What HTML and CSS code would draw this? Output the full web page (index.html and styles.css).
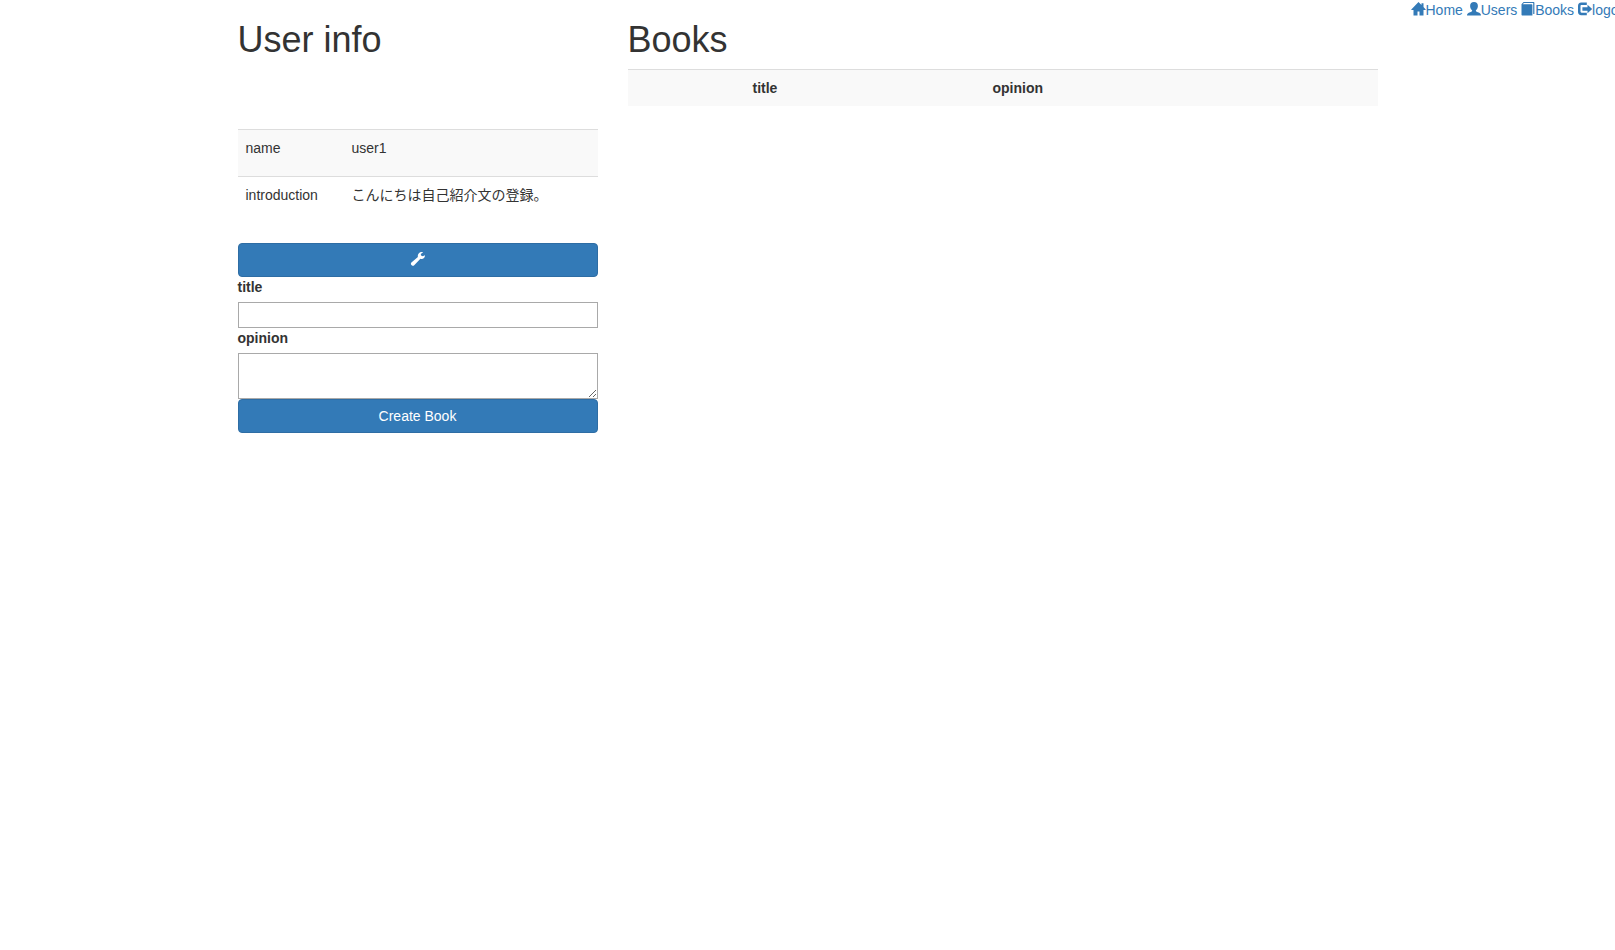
FILE: index.html
```html
<!DOCTYPE html>
<html lang="ja">
<head>
<meta charset="utf-8">
<meta name="viewport" content="width=device-width, initial-scale=1">
<title>User info</title>
<link rel="stylesheet" href="styles.css">
</head>
<body>
<div class="page">
  <main class="container">
    <section class="user">
      <h1>User info</h1>
      <table class="table user-table">
        <tbody>
          <tr><td class="user-key">name</td><td>user1</td></tr>
          <tr><td class="user-key">introduction</td><td>こんにちは自己紹介文の登録。</td></tr>
        </tbody>
      </table>
      <a class="btn" href="#edit" aria-label="Edit user">
        <svg class="icon" viewBox="0 0 14 14" aria-hidden="true"><path d="M13.900 3.200c.3 2-1.300 3.700-3.200 3.700-.5 0-.9-.1-1.300-.2L3.200 13.300c-.6.6-1.500.7-2.200.2L.2 12.700c-.5-.7-.4-1.500.2-2.100L6.900 4.900C6.300 2.400 8.200.1 10.600 0c.5 0 1 0 1.500.2L9.800 1.900l.2 1.700 1.800.7z"/></svg>
      </a>
      <form class="book-form">
        <label for="book-title">title</label>
        <input id="book-title" class="field" type="text">
        <label for="book-opinion">opinion</label>
        <textarea id="book-opinion" class="field" rows="2"></textarea>
        <button class="btn" type="button">Create Book</button>
      </form>
    </section>
    <section class="books">
      <h1>Books</h1>
      <table class="table books-table">
        <colgroup><col class="col-image"><col class="col-title"><col></colgroup>
        <thead>
          <tr><th></th><th>title</th><th>opinion</th></tr>
        </thead>
      </table>
    </section>
  </main>
  <nav class="nav">
    <a href="#home"><svg class="icon" viewBox="0 0 14 14" aria-hidden="true"><path d="M6.500 0 9.500 3V1.200h2v3.900L13.700 7.500c.2.300 0 .6-.3.600H11.500V13.500H7.500V9.500h-2v4H1.500V8.100H-.4c-.3 0-.5-.3-.3-.6z"/></svg>Home</a>
    <a href="#users"><svg class="icon" viewBox="0 0 14 14" aria-hidden="true"><path d="M7 .1c2.500 0 3.900 1.500 3.900 3.800 0 1.900-.8 3.500-2 4.300v.9c.2.500 1 .8 2 1.200 2 .8 3.100 1.400 3.100 3.200H0c0-1.800 1.100-2.400 3.100-3.200 1-.4 1.800-.7 2-1.200V8.200c-1.200-.8-2-2.400-2-4.300C3.100 1.600 4.500.1 7 .1z"/></svg>Users</a>
    <a href="#books"><svg class="icon" viewBox="0 0 14 14" aria-hidden="true"><path fill-rule="evenodd" d="M2.500 0h9.800c.7 0 1.100.4 1.100 1v11h-1.200V1.100H3L1.600 2.200h9c.5 0 .8.300.8.800v10.500H1.500c-.6 0-1-.4-1-1V2.200z"/></svg>Books</a>
    <a href="#logout"><svg class="icon" viewBox="0 0 14 14" aria-hidden="true"><path d="M8.800.6H3.200C1.200.6 0 1.900 0 3.900V10c0 2 1.200 3.200 3.200 3.200h5.600v-2.500H3.600c-.8 0-1.100-.4-1.100-1.100V4.200c0-.7.3-1.100 1.100-1.100h5.200zM9.500 2.800 14.200 7 9.500 11.200V8.700H4.400V5.300h5.100z"/></svg>logout</a>
  </nav>
</div>
</body>
</html>
```

FILE: styles.css
```css
* {
  box-sizing: border-box;
}

body {
  margin: 0;
  background: #fff;
  color: #333;
  font-family: "Liberation Sans", "Noto Sans CJK JP", sans-serif;
  font-size: 14px;
  line-height: 20px;
}

a {
  color: #337ab7;
  text-decoration: none;
}

h1 {
  margin: 20px 0 10px;
  font-size: 36px;
  font-weight: 500;
  line-height: 39px;
}

.page {
  display: grid;
  grid-template-columns: minmax(0, 1fr) minmax(0, 1170px) minmax(0, 1fr);
}

.container {
  grid-column: 2;
  display: grid;
  grid-template-columns: 1fr 2fr;
}

.user,
.books {
  min-width: 0;
  padding: 0 15px;
}

.nav {
  grid-column: 3;
  padding-left: 19px;
  overflow: hidden;
  white-space: nowrap;
}

.icon {
  width: 14px;
  height: 14px;
  fill: currentColor;
  overflow: visible;
  vertical-align: -1px;
}

.table {
  width: 100%;
  border-collapse: separate;
  border-spacing: 0;
  table-layout: fixed;
}

.table td,
.table th {
  padding: 8px;
  border-top: 1px solid #ddd;
  text-align: left;
  vertical-align: top;
}

.table tr:nth-child(odd) {
  background: #f9f9f9;
}

.user-table {
  margin: 70px 0 20px;
}

.user-table td {
  padding-bottom: 18px;
}

.user-key {
  width: 106px;
}

.col-image {
  width: 117px;
}

.col-title {
  width: 240px;
}

.btn {
  display: block;
  width: 100%;
  padding: 6px 12px;
  border: 1px solid #2e6da4;
  border-radius: 4px;
  background: #337ab7;
  color: #fff;
  font: inherit;
  text-align: center;
  cursor: pointer;
}

.book-form label {
  display: block;
  margin-bottom: 5px;
  font-weight: 700;
}

.field {
  display: block;
  width: 100%;
  padding: 2px;
  border: 1px solid #a9a9a9;
  border-radius: 0;
  background: #fff;
  color: inherit;
  font: inherit;
}
```
